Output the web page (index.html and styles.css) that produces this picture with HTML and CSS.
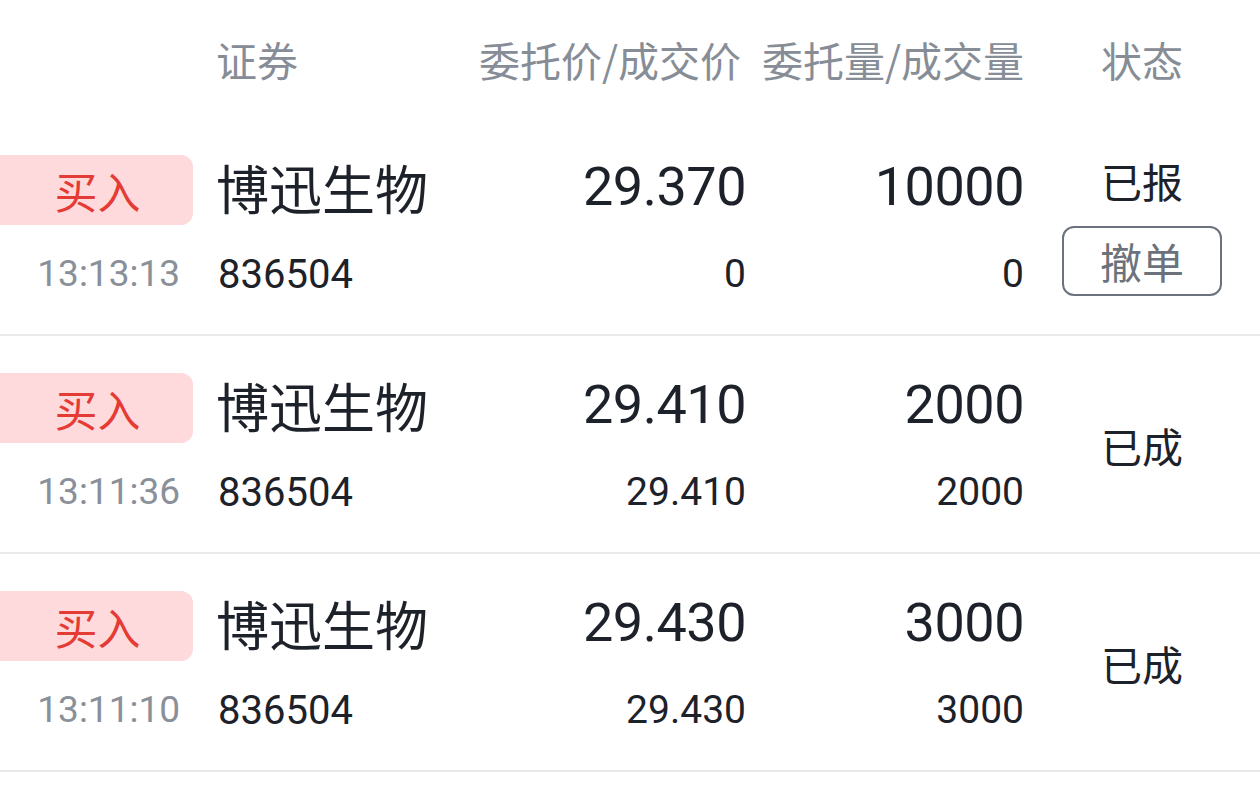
FILE: index.html
```html
<!DOCTYPE html>
<html lang="zh-CN">
<head>
<meta charset="utf-8">
<title>委托列表</title>
<link rel="stylesheet" href="styles.css">
</head>
<body>
<div class="page">
  <div class="head">
    <div class="h-sec">证券</div>
    <div class="h-price">委托价/成交价</div>
    <div class="h-qty">委托量/成交量</div>
    <div class="h-status">状态</div>
  </div>

  <div class="row">
    <div class="badge">买入</div>
    <div class="name">博迅生物</div>
    <div class="price">29.370</div>
    <div class="qty">10000</div>
    <div class="status status-cancel">
      <span class="st-text">已报</span>
      <button class="cancel">撤单</button>
    </div>
    <div class="time">13:13:13</div>
    <div class="code">836504</div>
    <div class="sub-price">0</div>
    <div class="sub-qty">0</div>
  </div>

  <div class="row">
    <div class="badge">买入</div>
    <div class="name">博迅生物</div>
    <div class="price">29.410</div>
    <div class="qty">2000</div>
    <div class="status"><span class="st-text">已成</span></div>
    <div class="time">13:11:36</div>
    <div class="code">836504</div>
    <div class="sub-price">29.410</div>
    <div class="sub-qty">2000</div>
  </div>

  <div class="row">
    <div class="badge">买入</div>
    <div class="name">博迅生物</div>
    <div class="price">29.430</div>
    <div class="qty">3000</div>
    <div class="status"><span class="st-text">已成</span></div>
    <div class="time">13:11:10</div>
    <div class="code">836504</div>
    <div class="sub-price">29.430</div>
    <div class="sub-qty">3000</div>
  </div>
</div>
</body>
</html>
```

FILE: styles.css
```css
* { box-sizing: border-box; margin: 0; padding: 0; }
html, body { background: #ffffff; }
body {
  font-family: Roboto, "Noto Sans CJK SC", sans-serif;
  color: #1d2129;
  width: 1260px;
  overflow: hidden;
}
.page { width: 1260px; }

.head,
.row {
  display: grid;
  grid-template-columns: 193px 25px 250px 278px 278px 236px;
}

.head {
  height: 118px;
  align-items: center;
  padding-bottom: 1px;
  font-family: "Noto Sans CJK SC", sans-serif;
  font-size: 41px;
  color: #878d96;
}
.h-sec { grid-column: 3; margin-left: -2px; }
.h-price { grid-column: 4; text-align: right; margin-right: 5px; }
.h-qty { grid-column: 5; text-align: right; }
.h-status { grid-column: 6; text-align: center; }

.row {
  height: 218px;
  padding-top: 37px;
  grid-template-rows: 70px 50px;
  row-gap: 23px;
  border-bottom: 2px solid #e8e9eb;
  align-items: center;
}

.badge {
  grid-column: 1; grid-row: 1;
  height: 70px;
  background: #ffdadc;
  border-radius: 0 12px 12px 0;
  color: #e53b35;
  font-family: "Noto Sans CJK SC", sans-serif;
  font-size: 43px;
  display: flex;
  align-items: center;
  justify-content: center;
  padding-left: 2px;
}
.name {
  grid-column: 3; grid-row: 1;
  font-family: "Noto Sans CJK SC", sans-serif;
  font-size: 53px;
  line-height: 1;
  margin-top: -6px;
  margin-left: -2px;
}
.price, .qty {
  grid-row: 1;
  text-align: right;
  font-size: 54px;
  letter-spacing: -0.5px;
  line-height: 1;
  margin-top: -6px;
}
.price { grid-column: 4; }
.qty { grid-column: 5; }

.time {
  grid-column: 1; grid-row: 2;
  text-align: right;
  padding-right: 13px;
  font-size: 37px;
  color: #8a9099;
}
.code {
  grid-column: 3; grid-row: 2;
  font-size: 40px;
  margin-top: 2px;
}
.sub-price, .sub-qty {
  grid-row: 2;
  text-align: right;
  font-size: 39px;
  margin-top: 2px;
}
.sub-price { grid-column: 4; }
.sub-qty { grid-column: 5; }

.status {
  grid-column: 6; grid-row: 1 / span 2;
  align-self: stretch;
  display: flex;
  flex-direction: column;
  align-items: center;
  justify-content: center;
  font-family: "Noto Sans CJK SC", sans-serif;
}
.st-text { font-size: 41px; line-height: 56px; }
.status-cancel { justify-content: flex-start; }
.status-cancel .st-text { margin-top: -3px; }
.cancel {
  margin-top: 18px;
  width: 160px;
  height: 70px;
  border: 2px solid #6b727c;
  border-radius: 12px;
  background: #fff;
  color: #6b727c;
  font-family: "Noto Sans CJK SC", sans-serif;
  font-size: 42px;
  line-height: 1;
}
```
